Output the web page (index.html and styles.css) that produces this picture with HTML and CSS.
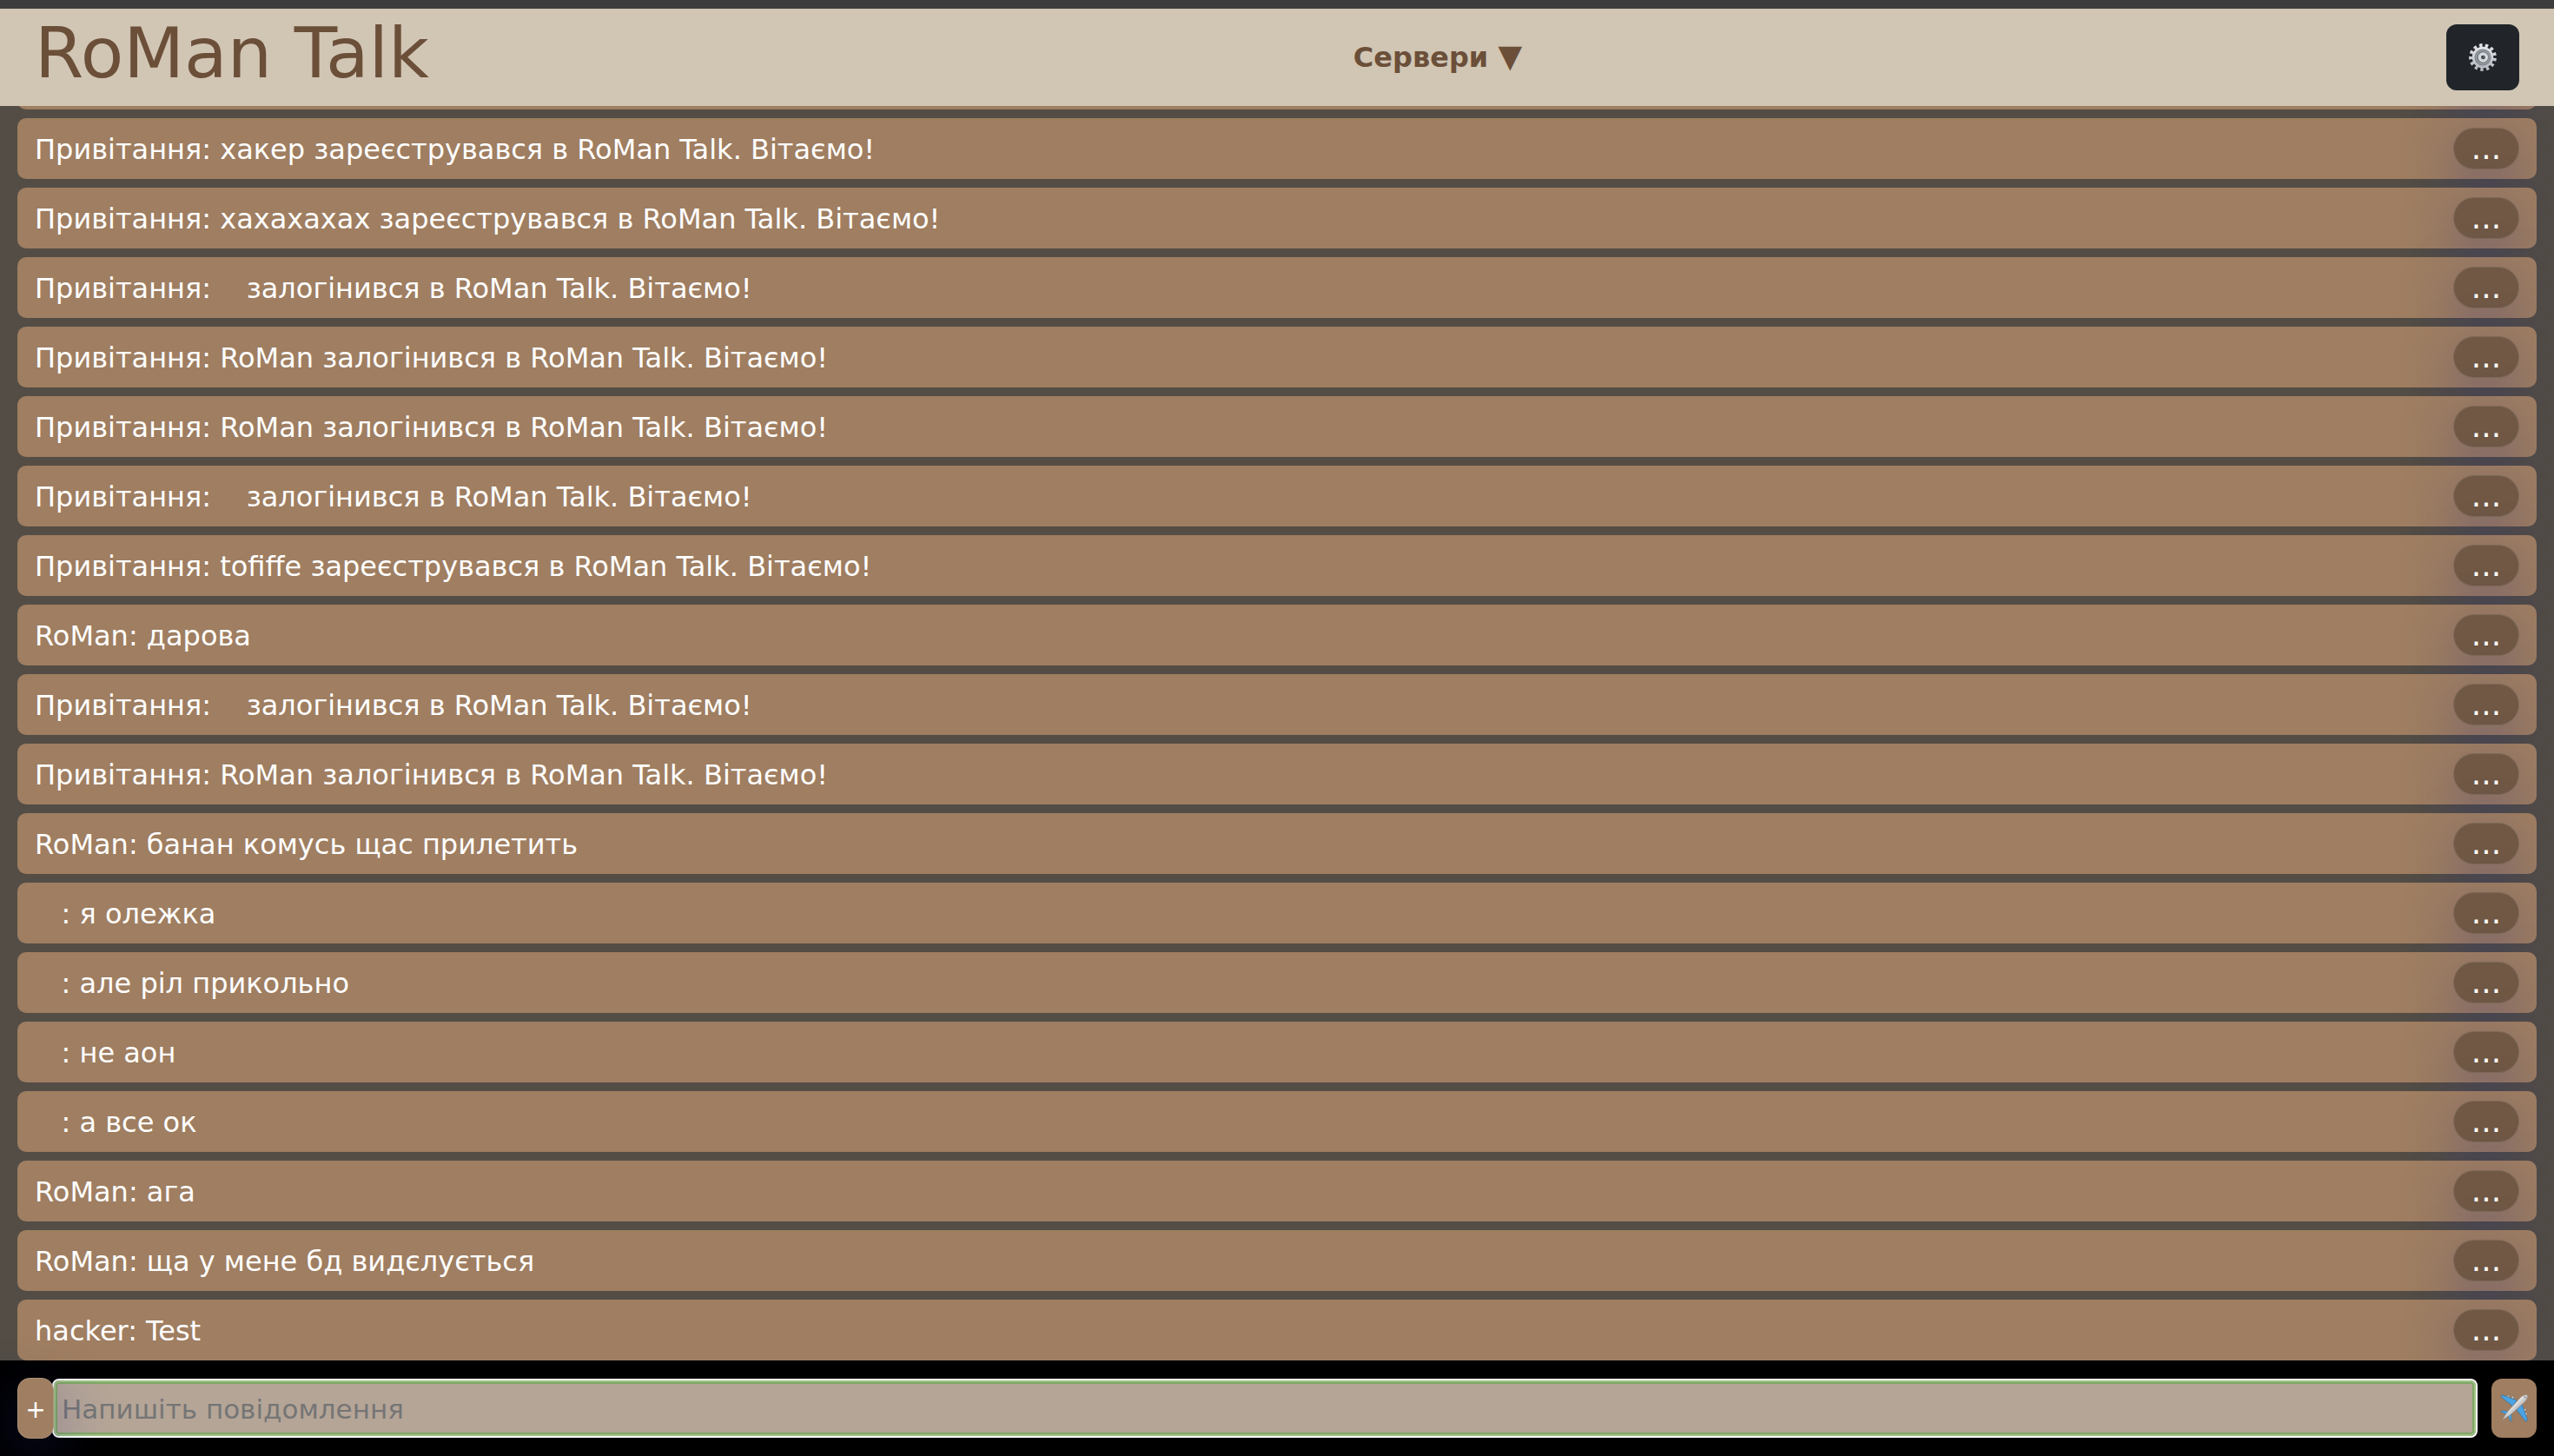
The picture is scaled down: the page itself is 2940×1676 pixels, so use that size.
FILE: index.html
```html
<!DOCTYPE html>
<html lang="uk">
<head>
<meta charset="utf-8">
<meta name="viewport" content="width=device-width, initial-scale=1">
<title>RoMan Talk</title>
<link rel="stylesheet" href="styles.css">
</head>
<body>
<header class="topbar">
  <h1 class="brand">RoMan Talk</h1>
  <button class="servers" type="button">Сервери <span class="arrow">▼</span></button>
  <button class="settings" type="button" aria-label="Налаштування">
    <svg class="icon" viewBox="0 0 32 32" aria-hidden="true">
      <defs>
        <linearGradient id="steel" x1="0" y1="0" x2="0" y2="1">
          <stop offset="0" stop-color="#dfe4e8"/><stop offset="1" stop-color="#b9bcc4"/>
        </linearGradient>
      </defs>
      <g fill="none" stroke="#594d48" stroke-width="3.4" stroke-dasharray="3.2 3.36" transform="rotate(2 16 16)"><circle cx="15.4" cy="16.4" r="13.6"/></g>
      <g fill="none" stroke="url(#steel)" stroke-width="4.6" stroke-dasharray="3.2 3.36" transform="rotate(4 16 16)"><circle cx="16" cy="16" r="13.6"/></g>
      <circle cx="16" cy="16" r="10.9" fill="#777c82" stroke="url(#steel)" stroke-width="2.8"/>
      <circle cx="16" cy="16" r="7.8" fill="none" stroke="#989da2" stroke-width="1.6"/>
      <circle cx="16.4" cy="16" r="4" fill="#353537" stroke="#d3d9de" stroke-width="3.4"/>
      <path d="M15.6 17.6l2-3" stroke="#8e8e90" stroke-width="1"/>
    </svg>
  </button>
</header>

<main class="messages">
  <article class="message"><p class="text"></p><button class="more" type="button" aria-label="Меню"></button></article>
  <article class="message"><p class="text">Привітання: хакер зареєструвався в RoMan Talk. Вітаємо!</p><button class="more" type="button">...</button></article>
  <article class="message"><p class="text">Привітання: хахахахах зареєструвався в RoMan Talk. Вітаємо!</p><button class="more" type="button">...</button></article>
  <article class="message"><p class="text">Привітання: &nbsp;&nbsp; залогінився в RoMan Talk. Вітаємо!</p><button class="more" type="button">...</button></article>
  <article class="message"><p class="text">Привітання: RoMan залогінився в RoMan Talk. Вітаємо!</p><button class="more" type="button">...</button></article>
  <article class="message"><p class="text">Привітання: RoMan залогінився в RoMan Talk. Вітаємо!</p><button class="more" type="button">...</button></article>
  <article class="message"><p class="text">Привітання: &nbsp;&nbsp; залогінився в RoMan Talk. Вітаємо!</p><button class="more" type="button">...</button></article>
  <article class="message"><p class="text">Привітання: tofiffe зареєструвався в RoMan Talk. Вітаємо!</p><button class="more" type="button">...</button></article>
  <article class="message"><p class="text">RoMan: дарова</p><button class="more" type="button">...</button></article>
  <article class="message"><p class="text">Привітання: &nbsp;&nbsp; залогінився в RoMan Talk. Вітаємо!</p><button class="more" type="button">...</button></article>
  <article class="message"><p class="text">Привітання: RoMan залогінився в RoMan Talk. Вітаємо!</p><button class="more" type="button">...</button></article>
  <article class="message"><p class="text">RoMan: банан комусь щас прилетить</p><button class="more" type="button">...</button></article>
  <article class="message"><p class="text">&nbsp;&nbsp; : я олежка</p><button class="more" type="button">...</button></article>
  <article class="message"><p class="text">&nbsp;&nbsp; : але ріл прикольно</p><button class="more" type="button">...</button></article>
  <article class="message"><p class="text">&nbsp;&nbsp; : не аон</p><button class="more" type="button">...</button></article>
  <article class="message"><p class="text">&nbsp;&nbsp; : а все ок</p><button class="more" type="button">...</button></article>
  <article class="message"><p class="text">RoMan: ага</p><button class="more" type="button">...</button></article>
  <article class="message"><p class="text">RoMan: ща у мене бд видєлується</p><button class="more" type="button">...</button></article>
  <article class="message"><p class="text">hacker: Test</p><button class="more" type="button">...</button></article>
</main>

<form class="composer">
  <button class="attach" type="button">+</button>
  <input class="entry" type="text" placeholder="Напишіть повідомлення" aria-label="Напишіть повідомлення">
  <button class="send" type="button" aria-label="Надіслати">
    <svg class="icon" viewBox="0 0 32 32" aria-hidden="true">
      <defs>
        <linearGradient id="hull" x1="0" y1="0" x2="1" y2="1">
          <stop offset=".35" stop-color="#fdfdfd"/><stop offset=".65" stop-color="#a9a6a6"/>
        </linearGradient>
      </defs>
      <g fill="#d9d5d2" stroke="#6d625b" stroke-width=".5">
        <ellipse cx="9.5" cy="2.4" rx="1.7" ry="1.1" transform="rotate(-45 9.5 2.4)"/>
        <ellipse cx="14.5" cy="3.6" rx="1.7" ry="1.1" transform="rotate(-45 14.5 3.6)"/>
        <ellipse cx="28.6" cy="17.8" rx="1.7" ry="1.1" transform="rotate(-45 28.6 17.8)"/>
        <ellipse cx="29.8" cy="22.6" rx="1.7" ry="1.1" transform="rotate(-45 29.8 22.6)"/>
      </g>
      <path d="M.8 1.6L3.4 1l16 6-5 6.600L2.400 4z" fill="#4ba3e2" stroke="#2a6fa8" stroke-width=".6"/>
      <path d="M30.600 31l.6-2.600-6-16.400-6.800 5L28.800 30.600z" fill="#4ba3e2" stroke="#2a6fa8" stroke-width=".6"/>
      <path d="M.8 19.600l1.600-.8 8 1-2 4z" fill="#4ba3e2" stroke="#2a6fa8" stroke-width=".5"/>
      <path d="M12.600 31.400l.6-1.600-.6-8-4.200 2z" fill="#4ba3e2" stroke="#2a6fa8" stroke-width=".5"/>
      <path d="M2.400 29.400L8.600 20 23.600 3.600C26 1 30 .2 31.200.8c.8 1.400 0 5.200-2.600 7.800L12 23.400z" fill="url(#hull)" stroke="#8b8683" stroke-width=".5"/>
      <path d="M27.600 2.200l2.200 2.200" stroke="#555b66" stroke-width="1"/>
    </svg>
  </button>
</form>
</body>
</html>
```

FILE: styles.css
```css
* {
  box-sizing: border-box;
}

body {
  margin: 0;
  height: 100vh;
  display: flex;
  flex-direction: column;
  background: #000;
  color: #fff;
  font: 32px/48px "DejaVu Sans", Verdana, sans-serif;
}

button,
input {
  margin: 0;
  padding: 0;
  border: 0;
  color: inherit;
  font: inherit;
}

.icon {
  display: block;
  width: 32px;
  height: 32px;
  overflow: visible;
}

.topbar {
  flex: none;
  display: flex;
  align-items: center;
  justify-content: space-between;
  padding: 0 40px;
  height: 122px;
  border-top: 10px solid #3c3c3c;
  background: #d1c5b4;
  color: #6b4f39;
}

.brand {
  margin: 0;
  padding-bottom: 10px;
  font-size: 81px;
  font-weight: 400;
  line-height: 96px;
}

.servers {
  background: none;
  font-weight: 700;
}

.arrow {
  font-size: 36px;
  line-height: 36px;
}

.settings {
  display: grid;
  place-items: center;
  width: 84px;
  height: 76px;
  border-radius: 12px;
  background: #212529;
}

.messages {
  flex: 1;
  min-height: 0;
  display: flex;
  flex-direction: column;
  justify-content: flex-end;
  gap: 10px;
  padding: 0 20px;
  overflow: hidden;
  background: #534d46;
}

.message {
  flex: none;
  display: flex;
  align-items: center;
  justify-content: space-between;
  padding: 0 20px;
  height: 70px;
  border-radius: 10px;
  background: #9f7e61;
}

.text {
  margin: 0;
  padding-top: 2px;
  white-space: pre-wrap;
}

.more {
  width: 76px;
  height: 48px;
  border: 1px solid rgba(255, 255, 255, 0.1);
  border-radius: 24px;
  background: #705845;
  box-shadow: 0 16px 64px rgba(31, 38, 135, 0.37);
  font-size: 36px;
  line-height: 46px;
}

.composer {
  flex: none;
  display: flex;
  align-items: center;
  padding: 20px;
  background: #000;
}

.attach {
  position: relative;
  z-index: 1;
  width: 42px;
  height: 70px;
  padding-top: 4px;
  border: 1px solid #ad917a;
  border-radius: 14px;
  background: #9f7e61;
  box-shadow: 0 16px 64px rgba(31, 38, 135, 0.37);
  font-size: 28px;
}

.entry {
  flex: 1;
  min-width: 0;
  height: 64px;
  padding: 2px 7px 0;
  border: 2px solid #9fc384;
  border-radius: 6px;
  outline: 2px solid #fff;
  background: #b5a597;
  box-shadow: inset 0 0 0 2px #80a765;
  font-size: 31px;
}

.entry::placeholder {
  color: #757575;
  opacity: 1;
}

.send {
  display: grid;
  place-items: center;
  width: 52px;
  height: 68px;
  margin-left: 18px;
  border-radius: 12px;
  background: #9f7e61;
}
```
